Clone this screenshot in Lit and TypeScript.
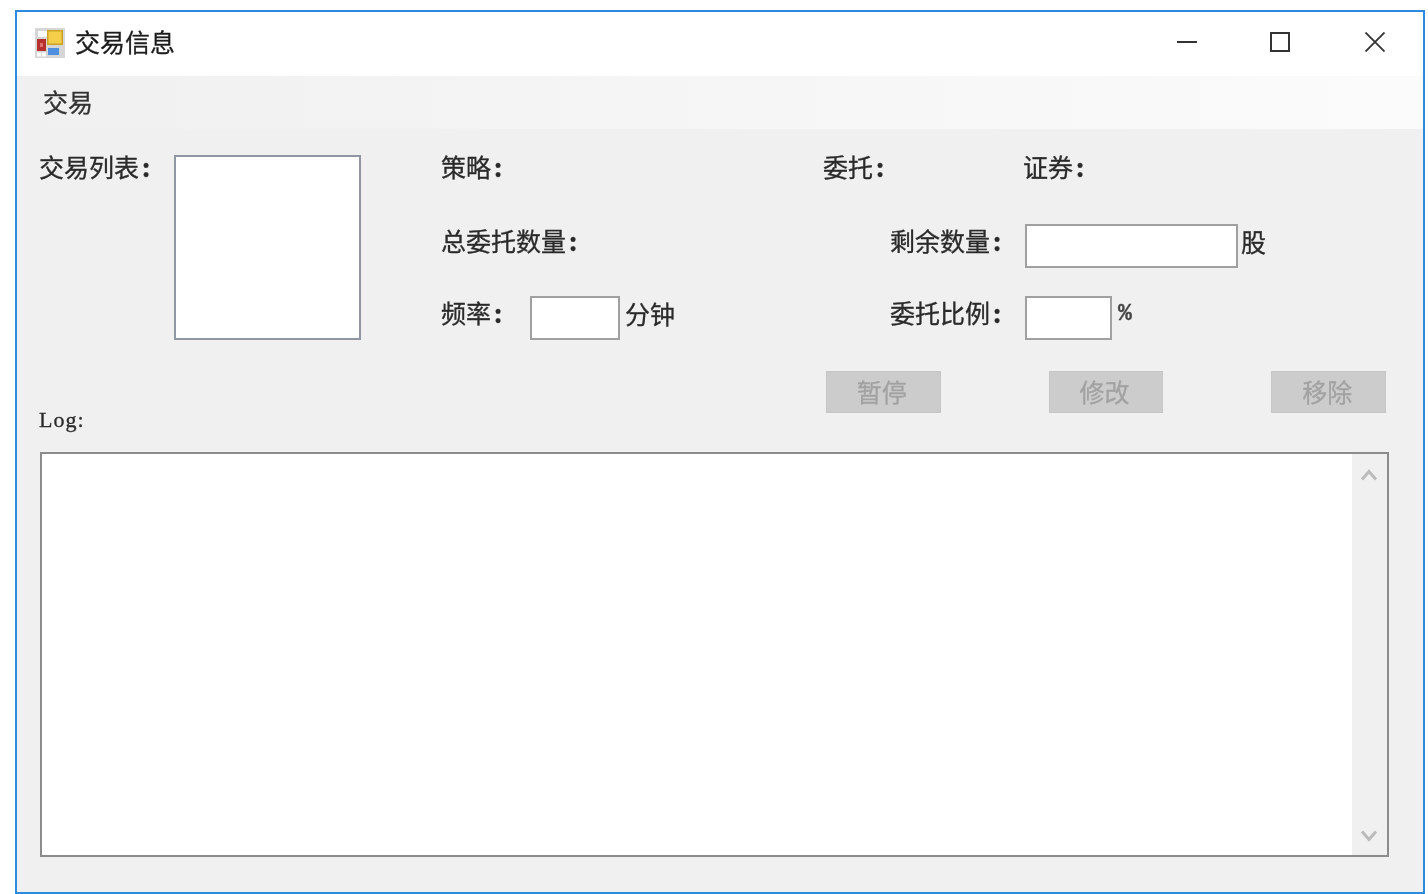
import { LitElement, html, css } from "lit";
import { customElement } from "lit/decorators.js";

@customElement("app-root")
export class AppRoot extends LitElement {
  static styles = css`
    :host {
      display: block;
      box-sizing: border-box;
      width: 1428px;
      height: 894px;
      padding: 10px 3px 0 15px;
      background: #fff;
      font-family: "Noto Sans CJK SC", "Noto Sans", sans-serif;
      font-size: 25px;
      color: #2a2a2a;
    }
    * { box-sizing: border-box; }
    .window {
      height: 884px;
      border: 2px solid #2b8be0;
      display: flex;
      flex-direction: column;
      background: #f0f0f0;
      filter: blur(0.4px);
      -webkit-text-stroke: 0.3px currentColor;
    }
    .titlebar {
      height: 64px;
      background: #fff;
      display: flex;
      align-items: center;
      padding-left: 18px;
      flex: none;
    }
    .app-icon { width: 30px; height: 30px; margin-top: -3px; flex: none; }
    .title { margin-left: 10px; line-height: 26px; margin-top: -6px; color: #1c1c1c; }
    .controls { margin-left: auto; display: flex; margin-right: 38px; gap: 73px; margin-top: -4px; }
    .controls svg { width: 20px; height: 20px; display: block; }
    .controls svg:last-child { margin-left: 2px; }
    .menubar {
      height: 53px;
      flex: none;
      padding-left: 26px;
      display: flex;
      align-items: center;
      background: linear-gradient(to right, #f0f0f0, #fbfbfb);
    }
    .menuitem { line-height: 26px; margin-top: -4px; color: #333; }
    .form { flex: 1; padding: 26px 34px 0 22px; }
    .top { display: flex; }
    .listcol { display: flex; width: 402px; flex: none; }
    .listlabel { width: 135px; flex: none; }
    .lbl { line-height: 22px; white-space: nowrap; }
    .colon { display: inline-block; width: 14px; text-align: center; font-weight: 700; }
    .listbox {
      width: 187px;
      height: 185px;
      background: #fff;
      border: 2px solid #9096a2;
    }
    .fields {
      display: grid;
      grid-template-columns: 382px 67px 135px 1fr;
      grid-template-rows: 41px 44px 44px;
      row-gap: 28px;
      align-items: start;
    }
    .c1 { grid-column: 1; }
    .c2 { grid-column: 2 / span 2; }
    .c3 { grid-column: 3; }
    .c4 { grid-column: 4; }
    .shift { margin-left: -2px; }
    .low { padding-top: 5px; }
    .inline { display: flex; align-items: flex-start; }
    .freq-label { width: 89px; flex: none; }
    input {
      display: block;
      height: 44px;
      border: 2px solid #a0a0a0;
      background: #fff;
      padding: 0;
      margin: 0;
      flex: none;
      outline: none;
    }
    .w90 { width: 90px; }
    .w212 { width: 213px; }
    .w87 { width: 87px; }
    .unit { line-height: 26px; padding-top: 4px; margin-left: 5px; }
    .unit.tight { margin-left: 3px; }
    .pct {
      font-family: "Liberation Mono", monospace;
      font-size: 23px;
      font-weight: 700;
      margin-left: 6px;
      line-height: 36px;
      color: #444;
    }
    .actions {
      display: flex;
      height: 59px;
      margin-top: 31px;
      margin-bottom: 22px;
      padding-right: 3px;
      justify-content: space-between;
    }
    .log-label {
      align-self: flex-end;
      font-family: "Liberation Serif", serif;
      font-size: 22px;
      line-height: 20px;
      letter-spacing: 1px;
      color: #2a2a2a;
    }
    .buttons { display: flex; gap: 108px; align-items: flex-start; }
    button {
      width: 114.67px;
      height: 42px;
      background: #ccc;
      border: 1px solid #c6c6c6;
      color: #a2a2a2;
      font: inherit;
      line-height: 26px;
      padding: 0 3px 2px 0;
    }
    .log {
      margin-left: 1px;
      height: 405px;
      border: 2px solid #8c8c8c;
      background: #fff;
      display: flex;
    }
    .log-body { flex: 1; }
    .scroll {
      width: 35px;
      background: #f0f0f0;
      display: flex;
      flex-direction: column;
      justify-content: space-between;
      align-items: center;
      padding: 14px 2px 12px 0;
    }
    .scroll svg { width: 18px; height: 14px; display: block; }
  `;

  render() {
    const colon = html`<span class="colon">:</span>`;
    return html`
      <div class="window">
        <div class="titlebar">
          <svg class="app-icon" viewBox="0 0 30 30">
            <rect width="30" height="30" fill="#d6d6d6" />
            <rect x="3" y="3" width="9" height="6" fill="#fff" />
            <rect x="12" y="2" width="16" height="15" fill="#c9a227" />
            <rect x="13.5" y="3.5" width="13" height="12" fill="#f6cf4a" />
            <rect x="2" y="11" width="9" height="12" fill="#b5302c" />
            <rect x="5" y="15" width="3" height="4" fill="#e07070" />
            <rect x="13" y="20" width="11" height="7" fill="#4f8fe0" />
            <rect x="2" y="24.5" width="4" height="4" fill="#fff" />
            <rect x="7" y="24.5" width="4" height="4" fill="#fff" />
          </svg>
          <span class="title">交易信息</span>
          <div class="controls">
            <svg viewBox="0 0 20 20"><path d="M0 10H20" stroke="#333" stroke-width="2" fill="none" /></svg>
            <svg viewBox="0 0 20 20"><rect x="1" y="1" width="18" height="18" stroke="#333" stroke-width="2" fill="none" /></svg>
            <svg viewBox="0 0 20 20"><path d="M0.5 0.5L19.5 19.5M19.5 0.5L0.5 19.5" stroke="#333" stroke-width="1.8" fill="none" /></svg>
          </div>
        </div>
        <div class="menubar"><span class="menuitem">交易</span></div>
        <div class="form">
          <div class="top">
            <div class="listcol">
              <div class="lbl listlabel">交易列表${colon}</div>
              <div class="listbox"></div>
            </div>
            <div class="fields">
              <div class="lbl c1">策略${colon}</div>
              <div class="lbl c2">委托${colon}</div>
              <div class="lbl c4 shift">证券${colon}</div>

              <div class="lbl c1 low">总委托数量${colon}</div>
              <div class="lbl c3 low">剩余数量${colon}</div>
              <div class="c4 inline"><input class="w212" /><span class="unit tight">股</span></div>

              <div class="c1 inline">
                <div class="lbl low freq-label">频率${colon}</div>
                <input class="w90" /><span class="unit">分钟</span>
              </div>
              <div class="lbl c3 low">委托比例${colon}</div>
              <div class="c4 inline"><input class="w87" /><span class="pct">%</span></div>
            </div>
          </div>
          <div class="actions">
            <div class="log-label">Log:</div>
            <div class="buttons">
              <button disabled>暂停</button>
              <button disabled>修改</button>
              <button disabled>移除</button>
            </div>
          </div>
          <div class="log">
            <div class="log-body"></div>
            <div class="scroll">
              <svg viewBox="0 0 18 14"><path d="M2 11.5L9 3.5L16 11.5" stroke="#bbb" stroke-width="3" fill="none" /></svg>
              <svg viewBox="0 0 18 14"><path d="M2 2.5L9 10.5L16 2.5" stroke="#bbb" stroke-width="3" fill="none" /></svg>
            </div>
          </div>
        </div>
      </div>
    `;
  }
}
